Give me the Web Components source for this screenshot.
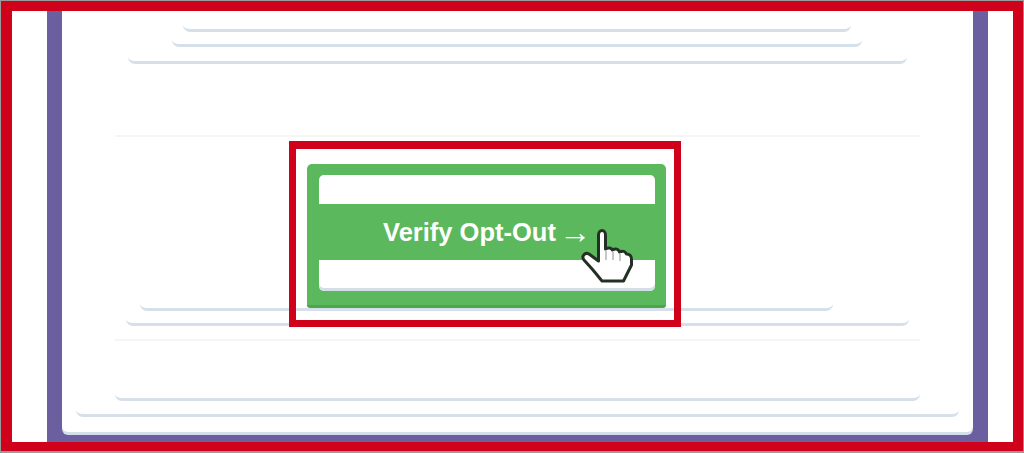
<!doctype html>
<html>
<head>
<meta charset="utf-8">
<title>Verify Opt-Out</title>
<style>
  html, body { margin: 0; height: 100%; background: #fff; }
  body { font-family: "Liberation Sans", Arial, sans-serif; }
</style>
</head>
<body>
<callout-frame>
  <email-card>
    <skeleton-line style="--top:11px;--left:121px;--right:122px"></skeleton-line>
    <skeleton-line style="--top:5px;--left:110px;--right:111px"></skeleton-line>
    <skeleton-line style="--top:7px;--left:66px;--right:66px"></skeleton-line>
    <card-rule style="--top:71px"></card-rule>
    <skeleton-line style="--top:165px;--left:78px;--right:140px"></skeleton-line>
    <skeleton-line style="--top:5px;--left:64px;--right:64px"></skeleton-line>
    <card-rule style="--top:13px"></card-rule>
    <skeleton-line style="--top:51px;--left:53px;--right:53px"></skeleton-line>
    <skeleton-line style="--top:6px;--left:14px;--right:14px"></skeleton-line>
    <verify-button slot="overlay">Verify Opt-Out <span style="font-weight:400;font-size:32px;line-height:20px;margin-left:-4px">→</span></verify-button>
  </email-card>
</callout-frame>

<script>
// small helper so each element only has to declare its css + markup
function shadow(el, html) {
  el.attachShadow({ mode: "open" }).innerHTML = html;
}

class CalloutFrame extends HTMLElement {
  connectedCallback() {
    shadow(this, `<style>
      :host { display: block; box-sizing: border-box; height: 453px; width: 1024px;
              border: 1px solid #9a9a9a; border-bottom-width: 2px; overflow: hidden; }
      .red { box-sizing: border-box; height: 100%; border: solid #d0021b;
             border-width: 10px 10px 9px 11px; background: #fff; padding: 0 25px 0 35px; }
      .purple { box-sizing: border-box; height: 100%; background: #6c5f9f; padding: 0 15px 10px; }
    </style>
    <div class="red"><div class="purple"><slot></slot></div></div>`);
  }
}

class EmailCard extends HTMLElement {
  connectedCallback() {
    shadow(this, `<style>
      :host { display: block; position: relative; box-sizing: border-box; height: 100%;
              background: #fff; padding-bottom: 14px; overflow: visible;
              border-radius: 0 0 6px 6px; box-shadow: 0 3px 0 #d3dfea; }
      .lines { display: flex; flex-direction: column; }
      /* the red highlight sits over the skeleton lines */
      .overlay { position: absolute; left: 227px; top: 130px; }
    </style>
    <div class="lines"><slot></slot></div>
    <div class="overlay"><slot name="overlay"></slot></div>`);
  }
}

class SkeletonLine extends HTMLElement {
  connectedCallback() {
    shadow(this, `<style>
      :host { display: block; box-sizing: border-box; height: 10px;
              margin: var(--top) var(--right) 0 var(--left);
              border-bottom: 3px solid #d5e0eb; border-radius: 0 0 7px 7px; }
    </style>`);
  }
}

class CardRule extends HTMLElement {
  connectedCallback() {
    shadow(this, `<style>
      :host { display: block; height: 2px; margin: var(--top) 53px -1px;
              background: #f4f5f7; }
    </style>`);
  }
}

class VerifyButton extends HTMLElement {
  connectedCallback() {
    shadow(this, `<style>
      :host { display: block; box-sizing: border-box; width: 392px; height: 186px;
              border: 7px solid #d0021b; border-top-width: 8px;
              padding: 15px 8px 0 11px; }
      .btn { position: relative; box-sizing: border-box; height: 144px;
             display: flex; flex-direction: column;
             background: #5cb85c; border-bottom: 3px solid #4ea54e;
             border-radius: 5px 5px 3px 3px; padding: 11px 11px 14px 12px; }
      .bar { height: 29px; background: #fff; border-radius: 5px 5px 0 0; }
      .bar.low { height: 31px; border-radius: 0 0 5px 5px; box-shadow: inset 0 -3px 0 #d3dfe6; }
      .label { flex: 1; display: flex; align-items: center; justify-content: center;
               color: #fff; font: bold 25.5px "Liberation Sans", Arial, sans-serif;
               white-space: pre; }
      svg { position: absolute; left: 268px; top: 61px; width: 65px; height: 65px;
            overflow: visible; filter: blur(.7px); }
    </style>
    <div class="btn">
      <div class="bar"></div>
      <div class="label"><slot></slot></div>
      <div class="bar low"></div>
      <svg viewBox="0 0 65 65" aria-hidden="true">
        <path d="M23.5 36V10c0-6 7-6 7 0v14c3-2 6-1 7 1c3-2 6-1 7 2c4-2 6 0 7 2c3 0 5 2 5 5v6l-8 16H27l-9-11l-9-10c-3-4 1-8 5-6z"
              fill="#fff" stroke="#253025" stroke-width="3" stroke-linejoin="round"/>
        <path d="M31 26v9M38 27v8M45 29v7" fill="none" stroke="#c4c8c4" stroke-width="2"/>
      </svg>
    </div>`);
  }
}

customElements.define("callout-frame", CalloutFrame);
customElements.define("email-card", EmailCard);
customElements.define("skeleton-line", SkeletonLine);
customElements.define("card-rule", CardRule);
customElements.define("verify-button", VerifyButton);
</script>
</body>
</html>
